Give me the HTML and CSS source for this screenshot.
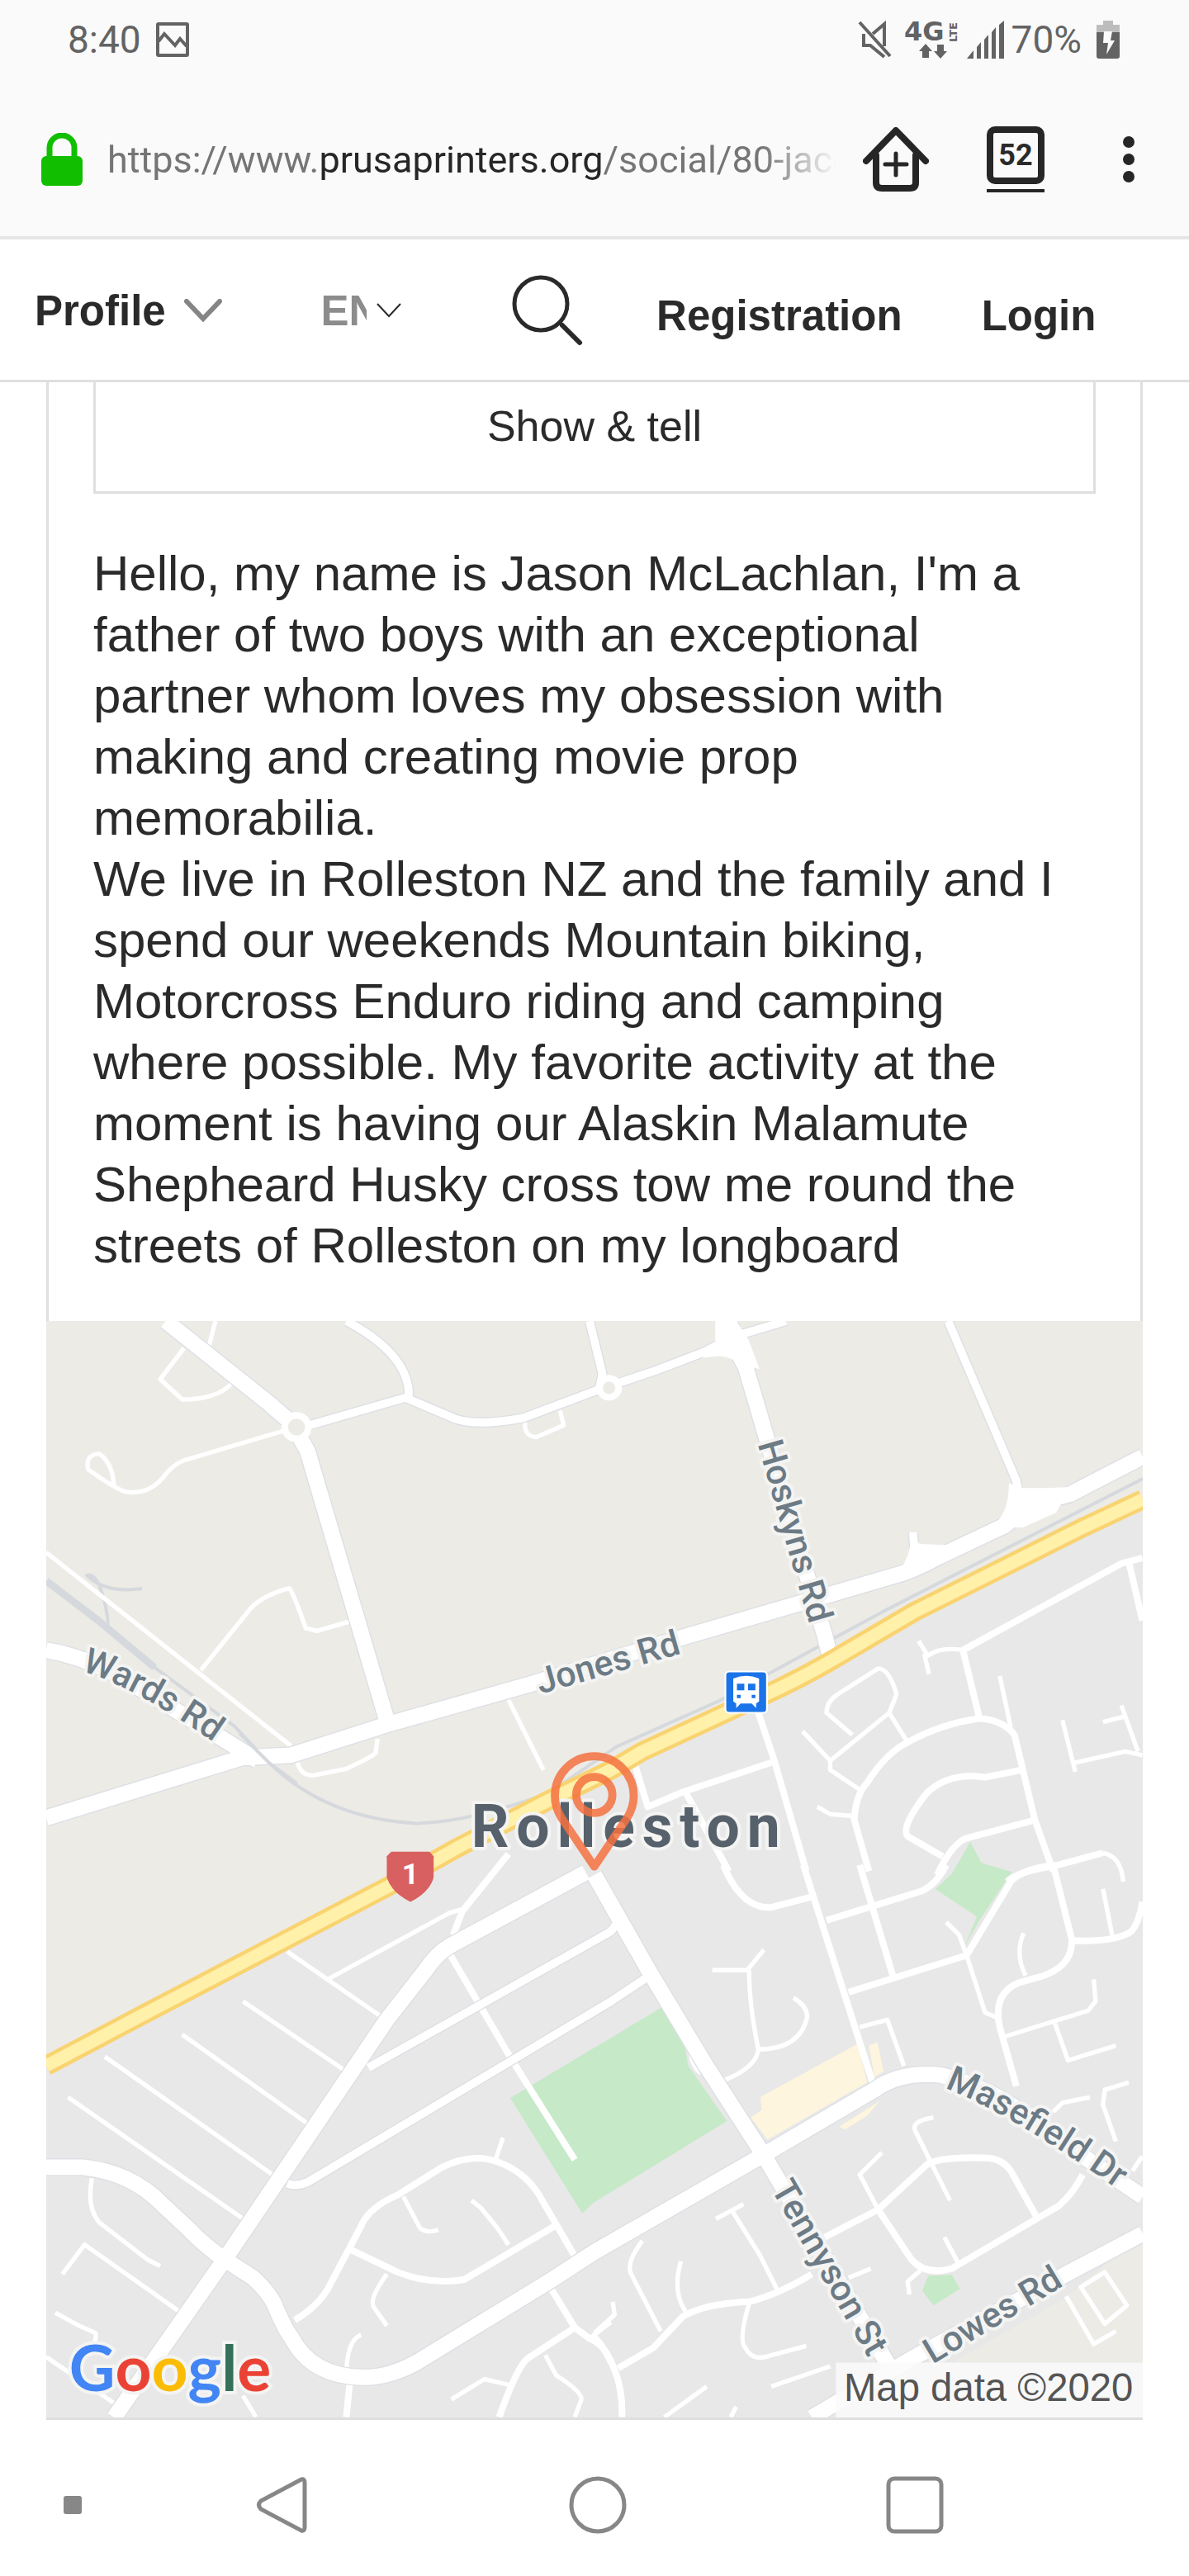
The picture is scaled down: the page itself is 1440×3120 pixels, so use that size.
FILE: index.html
```html
<!DOCTYPE html>
<html lang="en">
<head>
    <meta charset="UTF-8">
    <meta name="viewport" content="width=device-width, initial-scale=1.0">
    <title>Profile - PrusaPrinters</title>
    <link rel="stylesheet" href="styles.css">
</head>
<body>
    <div class="status-bar">
        <div class="status-group">
            <span>8:40</span>
            <svg width="40" height="42" viewBox="0 0 40 42">
                <rect x="2" y="2" width="36" height="38" rx="1" fill="none" stroke="#636363" stroke-width="4"/>
                <path d="M3 23l7-9 13 14 6-8 8 9" fill="none" stroke="#636363" stroke-width="4"/>
            </svg>
        </div>
        <div class="status-group status-right">
            <svg class="network" width="124" height="46" viewBox="0 0 124 46">
                <g fill="none" stroke="#636363" stroke-width="4">
                    <path d="M2 2l37 41"/>
                    <path d="M18 16L32 4v27M7 16v14h8l17 14"/>
                </g>
                <text class="net-type" x="56" y="24">4G</text>
                <text class="net-lte" transform="translate(120 26) rotate(-90)">LTE</text>
                <path fill="#636363" d="M82 28l8 9h-4v8h-8v-8h-4zM100 46l-8-9h4v-8h8v8h4z"/>
            </svg>
            <svg width="46" height="46" viewBox="0 0 46 46">
                <path fill="#636363" d="M0 46l8-10v10zM12 46V32l5-6v20zM21 46V23l5-6v29zM30 46V14l5-6v38zM39 46V5l6-5v46z"/>
            </svg>
            <span>70%</span>
            <svg class="battery" width="28" height="46" viewBox="0 0 28 46">
                <path fill="#bdbdbd" d="M8 0h12v5h8v9H0V5h8z"/>
                <path fill="#636363" d="M0 14h28v29q0 3-3 3H3q-3 0-3-3z"/>
                <path fill="#fafafa" d="M9 13h10l-2 11h5L12 41l2-14H8z"/>
            </svg>
        </div>
    </div>

    <div class="toolbar">
        <svg width="50" height="64" viewBox="0 0 50 64">
            <path d="M10 32V18a15 15 0 0 1 30 0v14" fill="none" stroke="#12be00" stroke-width="7"/>
            <rect y="28" width="50" height="36" rx="6" fill="#12be00"/>
        </svg>
        <div class="url">https://www.<b>prusaprinters.org</b>/social/80-jace</div>
        <button class="tool" type="button" aria-label="Home">
            <svg width="80" height="78" viewBox="0 0 80 78" fill="none" stroke="#262626" stroke-linecap="round" stroke-linejoin="round">
                <path d="M4 41L40 4l36 37M16 34v33q0 7 7 7h34q7 0 7-7V34" stroke-width="8"/>
                <path d="M40 32v26M27 45h26" stroke-width="5"/>
            </svg>
        </button>
        <button class="tool tabs" type="button" aria-label="Tabs"><span>52</span></button>
        <button class="tool" type="button" aria-label="Menu">
            <svg width="14" height="58" viewBox="0 0 14 58" fill="#262626">
                <circle cx="7" cy="8" r="7"/><circle cx="7" cy="29" r="7"/><circle cx="7" cy="50" r="7"/>
            </svg>
        </button>
    </div>

    <header class="site-header">
        <a class="profile" href="#">Profile
            <svg width="46" height="28" viewBox="0 0 46 28"><path d="M3 3l20 21L43 3" fill="none" stroke="#858585" stroke-width="6" stroke-linecap="round"/></svg>
        </a>
        <div class="lang">
            <select aria-label="Language"><option>EN</option></select>
            <svg width="30" height="18" viewBox="0 0 30 18"><path d="M1 1l14 15L29 1" fill="none" stroke="#2a2a2a" stroke-width="2"/></svg>
        </div>
        <button class="search" type="button" aria-label="Search">
            <svg width="88" height="88" viewBox="0 0 88 88" fill="none" stroke="#2a2a2a" stroke-linecap="round">
                <circle cx="36" cy="36" r="32" stroke-width="5"/>
                <path d="M62 62l21 21" stroke-width="6"/>
            </svg>
        </button>
        <a class="account" href="#">Registration</a>
        <a class="account" href="#">Login</a>
    </header>

    <main class="card">
        <div class="card-body">
            <a class="tab" href="#">Show &amp; tell</a>
            <p class="bio">Hello, my name is Jason McLachlan, I'm a father of two boys with an exceptional partner whom loves my obsession with making and creating movie prop memorabilia.<br>
            We live in Rolleston NZ and the family and I spend our weekends Mountain biking, Motorcross Enduro riding and camping where possible. My favorite activity at the moment is having our Alaskin Malamute Shepheard Husky cross tow me round the streets of Rolleston on my longboard</p>
        </div>
        <svg class="map" viewBox="0 0 2975 2975" role="img" aria-label="Map of Rolleston">
            <defs>
                <path id="main-roads" d="M0 1348L530 1185 664 1178 924 1095 1314 985 1727 858 2037 768 2287 695Q2350 680 2420 640L2600 555 2667 500Q2720 485 2777 470L2975 368M0 893Q104 910 214 973L494 1143 574 1193M1464 1496L1094 1696Q1060 1716 1030 1760L924 1896 484 2546 184 2975M1487 1503L1637 1766 1787 2016 1942 2256 2287 2836M0 2296H100Q230 2310 314 2396L384 2461Q430 2510 484 2546L560 2595Q610 2640 624 2680 650 2740 664 2756 720 2866 864 2866 930 2866 1004 2826L1364 2606 1487 2526 1957 2256 2247 2086Q2317 2035 2427 2046 2560 2080 2650 2150L2827 2276 2975 2376M2975 2476L2767 2586 2347 2816 2077 2975M2127 913L2112 853 1897 123 1862 60 1855 0M924 1083L709 353 679 300M679 288L604 223 324 0"/>
                <path id="side-roads" d="M654 2340Q680 2350 710 2336L1532 1846 1637 1776M874 2026L1532 1656 1547 1636M714 283L974 208 1090 257Q1150 290 1294 263L1494 188 1657 133 1787 83 1862 43 2007 0M814 0Q984 90 984 203M1474 0L1509 143 1500 188M2447 0L2632 433 2647 510M2352 573L2357 650"/>
                <path id="highway" d="M0 2021L274 1876 934 1531 1114 1430 1364 1300 1532 1218 1617 1168 1897 1038Q2020 985 2127 923L2357 788 2587 673 2817 558 2975 484"/>
                <path id="wards-label" d="M94 950Q230 985 480 1160"/>
                <path id="masefield-label" d="M2437 2081Q2620 2150 2950 2386"/>
            </defs>
            <rect class="rural" width="2975" height="2975"/>
            <path class="urban" d="M0 2021L934 1531 1532 1218 2127 923 2975 484V2975H0z"/>
            <path class="rural" d="M2757 2656L2917 2526 2975 2490V2826H2457z"/>

            <!-- parks and shops -->
            <path class="park" d="M1259 2108L1672 1861 1732 1966 1742 2021 1847 2171 1487 2391 1454 2421zM2457 1500L2507 1413 2537 1470 2620 1495 2532 1626 2492 1696 2525 1616 2412 1541zM2392 2591L2457 2588 2479 2626 2407 2671 2377 2631z"/>
            <path class="shops" d="M1937 2106L2202 1961 2227 2066 1957 2221 1912 2161 1942 2140zM2232 1966L2255 1956 2272 2036 2247 2051zM2152 2186L2262 2116 2227 2156 2167 2194z"/>

            <!-- railway -->
            <path class="rail" d="M144 815L294 940 509 1098 604 1198Q760 1350 1004 1363 1150 1360 1364 1280L1547 1155 1827 1030 1967 953 2267 790 2975 428M144 815Q180 860 160 770T110 690Q160 740 260 726"/>
            <path class="rail rail-wide" d="M0 705L144 815 294 940"/>

            <!-- lanes, by quarter -->
            <g class="lane">
                <path transform="translate(-36 -47)" d="M410 120L345 205 405 260Q500 260 540 215M495 47L475 125M680 345L410 425Q380 435 350 475 310 520 250 510 220 500 150 450 140 410 180 407 215 430 220 495M36 675L700 1200M455 995L580 840Q610 795 695 772 705 780 740 880L770 888 860 862M715 1230Q720 1280 760 1280L850 1262Q940 1220 930 1215L935 1180M1290 1075L1385 1265M1335 315Q1330 360 1365 362L1440 330 1430 290"/>
                <path transform="translate(1487 -47)" d="M850 1190L800 1110 640 1240 565 1160M640 1240V1265L730 1325M700 1170L630 1110Q630 1080 660 1060L770 990Q800 990 820 1060L800 1110M605 1365L640 1385 700 1390M1000 940Q940 930 905 955L880 915M895 950L908 1005M1100 1010L1130 1150M1270 1130L1305 1270M1305 1245L1440 1215 1487 1225M1430 1090L1475 1215M1380 1135L1440 1120M1380 1490Q1430 1500 1435 1568"/>
                <path transform="translate(-36 1476)" d="M690 235L950 415M800 310L1130 130 1165 120M570 370L850 560M405 460L750 705M195 520L650 840M95 630L570 960M160 850Q145 930 180 970L310 1070 345 1088M80 1110L140 1030 395 1210M60 1215L125 1250 170 1270Q175 1290 150 1320M36 1335L220 1460M1005 900L1050 985Q1070 1000 1100 990M1190 910L1215 930 1260 985 1290 1030M960 1110Q910 1180 925 1200L960 1250M850 1390Q850 1290 890 1275M1275 740L1255 800M1390 1330L1420 1385Q1490 1430 1488 1450L1470 1498M1135 1450L1225 1395 1290 1410M570 1440L605 1498M1510 1285L1568 1240"/>
                <path transform="translate(1487 1476)" d="M320 285H415L460 230M420 285Q420 380 445 500 440 550 350 585M445 500Q560 500 578 410 575 380 540 360M955 155L990 190 1010 245 1060 400 1095 415M1165 185Q1140 240 1170 300M1380 65L1405 190M1115 465L1340 395 1360 370 1355 310M1250 430L1285 530 1415 490M720 440L795 420 840 545M920 685Q860 695 870 720L965 910M780 780L720 840 770 935M950 1010L990 1085M885 1100L850 1130 855 1165M330 960L405 920M375 940L450 1060 495 1150M130 1020Q85 1080 100 1110L180 1265M235 1075Q210 1160 250 1215M420 1190Q390 1290 410 1310 430 1350 480 1330L575 1305M50 1185L55 1220 0 1270M690 1120L750 1095M480 1415L640 1360M190 1498L305 1415M370 1498L385 1470M1450 590L1385 610 1380 650 1415 750M1245 670L1270 645 1345 630M1280 1170L1355 1300 1415 1265M1320 1145L1385 1105 1445 1195 1385 1245zM1460 830L1487 790M260 500Q265 550 290 565"/>
            </g>

            <!-- streets, by quarter -->
            <g class="street">
                <path transform="translate(1487 -47)" d="M110 1250L145 1365 240 1325 480 1245M250 1330L365 1540M445 1110L490 1245 575 1540M745 1540L705 1400Q710 1330 740 1300 790 1220 850 1190 940 1140 1045 1125 1110 1130 1140 1170L1195 1400 1245 1540M1045 1125L1000 940 1430 705 1487 690M1450 700L1487 860M1160 1265L1060 1285Q960 1270 900 1330 830 1420 850 1445L945 1500M1200 1400L1010 1450Q970 1465 930 1550M1120 1568Q1150 1540 1250 1525L1380 1490"/>
                <path transform="translate(-36 1476)" d="M1140 190L1165 125 1290-30M1130 240L1300 530 1470 800M710 1235Q770 1200 800 1150L890 980Q910 930 990 895L1110 820Q1190 780 1260 805 1330 830 1370 890L1475 1070M865 1045L990 1105Q1080 1140 1170 1125L1415 980M850 1498L860 1400M1400 1140L1470 1255 1340 1340Q1310 1370 1265 1498M1470 1255L1510 1285Q1550 1300 1568 1350"/>
                <path transform="translate(1487 1476)" d="M350 0Q400 120 480 115L595 85M567 0L755 590M720 0L810 300M630 150L890 70Q930 50 955 0M690 345L1010 245 1130 45Q1160 10 1250 0M1245 0L1295 200Q1300 270 1220 300L1150 320Q1080 350 1100 440L1145 600M1300 205Q1400 210 1450 185 1475 170 1487 100M625 1010L770 935 900 815Q930 790 1070 795 1110 800 1130 830L1200 955M770 935L860 1070Q900 1115 970 1095L1200 960 1260 925Q1300 890 1325 840M65 1365L160 1310 240 1225Q300 1190 420 1185 500 1165 590 1110M0 1280Q80 1370 75 1498"/>
            </g>

            <use class="side casing" href="#side-roads"/>
            <use class="main casing" href="#main-roads"/>
            <use class="side" href="#side-roads"/>
            <use class="main" href="#main-roads"/>
            <!-- widened junctions -->
            <path fill="#fff" d="M2612 440L2650 453H2720L2780 450 2740 520 2650 560 2560 560Q2612 530 2612 440zM2346 580L2370 605 2450 608 2400 670 2300 690Q2346 650 2346 580zM1815 0H1872L1905 50 1935 130 1885 120Q1860 95 1820 95L1780 100 1815 60z"/>
            <circle class="roundabout" cx="679" cy="288" r="32"/>
            <circle class="roundabout" cx="1527" cy="181" r="26"/>
            <use class="highway-edge" href="#highway"/>
            <use class="highway" href="#highway"/>
            <path class="rail" d="M524 1118L604 1198 680 1255"/>

            <g class="road-label">
                <text><textPath href="#wards-label">Wards Rd</textPath></text>
                <text transform="translate(1340 1012) rotate(-16)">Jones Rd</text>
                <text transform="translate(1930 333) rotate(74)">Hoskyns Rd</text>
                <text><textPath href="#masefield-label">Masefield Dr</textPath></text>
                <text transform="translate(1965 2354) rotate(60)">Tennyson St</text>
                <text transform="translate(2405 2831) rotate(-31)">Lowes Rd</text>
            </g>
            <text class="town" x="1153" y="1426">Rolleston</text>

            <!-- highway shield -->
            <path fill="#d96060" d="M924 1452L936 1440H1040L1051 1452V1510Q1040 1550 988 1576 936 1550 924 1510z"/>
            <text class="shield" x="988" y="1528">1</text>

            <!-- railway station -->
            <rect x="1840" y="949" width="118" height="116" rx="12" fill="#fff"/>
            <rect x="1845" y="953" width="108" height="108" rx="8" fill="#1a73e8"/>
            <path fill="#fff" d="M1864 970Q1899 956 1934 970V1032L1926 1038V1050L1914 1038H1884L1872 1050V1038L1864 1032z"/>
            <path fill="#1a73e8" d="M1874 984h20v18h-20zM1904 984h20v18h-20zM1874 1014h10v9h-10zM1914 1014h10v9h-10z"/>

            <!-- location pin -->
            <g fill="none" stroke="#f4713f" stroke-opacity=".85" stroke-width="22" stroke-linejoin="round">
                <path d="M1487 1480L1399 1350Q1380 1320 1380 1288A107 107 0 0 1 1594 1288Q1594 1320 1575 1350z"/>
                <circle cx="1487" cy="1286" r="49"/>
            </g>

            <text class="google" x="62" y="2904"><tspan fill="#4285f4">G</tspan><tspan fill="#ea4335">o</tspan><tspan fill="#fbbc05">o</tspan><tspan fill="#4285f4">g</tspan><tspan fill="#34705a">l</tspan><tspan fill="#ea4335">e</tspan></text>
            <rect x="2142" y="2826" width="833" height="149" fill="#fafafa" fill-opacity=".85"/>
            <text class="copyright" x="2164" y="2931">Map data ©2020</text>
        </svg>
    </main>

    <nav class="system-nav">
        <span class="nav-dot"></span>
        <button type="button" aria-label="Back">
            <svg width="62" height="70" viewBox="0 0 62 70"><path d="M55 4L6 30Q1 35 6 40L55 66Q59 67 59 62V8Q59 3 55 4z" fill="none" stroke="#878787" stroke-width="5"/></svg>
        </button>
        <button type="button" aria-label="Home screen">
            <svg width="70" height="70" viewBox="0 0 70 70"><circle cx="35" cy="35" r="32" fill="none" stroke="#878787" stroke-width="5"/></svg>
        </button>
        <button type="button" aria-label="Recent apps">
            <svg width="70" height="70" viewBox="0 0 70 70"><rect x="3" y="3" width="64" height="64" rx="7" fill="none" stroke="#878787" stroke-width="5"/></svg>
        </button>
    </nav>
</body>
</html>
```
FILE: styles.css
```css
* {
    box-sizing: border-box;
}

body {
    margin: 0;
    background-color: #fff;
    color: #2a2a2a;
    font-family: "Liberation Sans", Arial, sans-serif;
}

svg {
    display: block;
    flex-shrink: 0;
}

a {
    color: inherit;
    text-decoration: none;
}

button {
    padding: 0;
    border: none;
    background: none;
    color: inherit;
    cursor: pointer;
}

/* phone status bar */
.status-bar {
    display: flex;
    justify-content: space-between;
    align-items: center;
    height: 96px;
    padding: 0 84px 0 82px;
    background-color: #fafafa;
    color: #636363;
    font-family: Roboto, sans-serif;
    font-size: 46px;
}

.status-group {
    display: flex;
    align-items: center;
    gap: 18px;
}

.status-right {
    gap: 8px;
}

.network {
    overflow: visible;
}

.battery {
    margin-left: 10px;
}

.net-type {
    fill: #636363;
    font: bold 32px "DejaVu Sans", sans-serif;
}

.net-lte {
    fill: #636363;
    font: bold 13px "DejaVu Sans", sans-serif;
}

/* browser toolbar */
.toolbar {
    display: flex;
    align-items: center;
    height: 194px;
    padding: 4px 66px 0 50px;
    border-bottom: 4px solid #e6e6e6;
    background-color: #fafafa;
}

.url {
    flex: 1;
    min-width: 0;
    margin: 0 32px 0 30px;
    overflow: hidden;
    white-space: nowrap;
    color: #757575;
    font-family: Roboto, sans-serif;
    font-size: 45px;
    -webkit-mask-image: linear-gradient(to left, transparent, #000 90px);
    mask-image: linear-gradient(to left, transparent, #000 90px);
}

.url b {
    color: #262626;
    font-weight: normal;
}

.tool + .tool {
    margin-left: 70px;
}

.tabs {
    padding-bottom: 6px;
    border-bottom: 4px solid #262626;
}

.tabs span {
    display: block;
    width: 70px;
    border: 8px solid #262626;
    border-radius: 10px;
    font: bold 36px/54px Roboto, sans-serif;
}

.tabs + .tool {
    margin-left: 95px;
}

/* site header */
.site-header {
    display: grid;
    grid-template-columns: 346fr 230fr 176fr 393fr 251fr;
    align-items: center;
    height: 173px;
    padding: 2px 0 0 42px;
    border-bottom: 3px solid #dfdfdf;
    font-size: 51px;
    font-weight: bold;
}

.profile {
    display: flex;
    align-items: center;
    gap: 22px;
}

.lang {
    display: flex;
    align-items: center;
    gap: 12px;
}

.lang select {
    width: 56px;
    padding: 0;
    border: none;
    background: none;
    color: #8c8c8c;
    font: inherit;
    appearance: none;
}

.search {
    justify-self: start;
}

.account {
    padding-top: 12px;
}

/* profile card */
.card {
    margin: 0 56px;
    border-bottom: 3px solid #dfdfdf;
}

.card-body {
    padding: 0 54px 54px;
    border: solid #dfdfdf;
    border-width: 0 3px;
}

.tab {
    display: block;
    padding: 20px 0 46px;
    border: 3px solid #dfdfdf;
    border-top: none;
    font-size: 52px;
    line-height: 66px;
    text-align: center;
}

.bio {
    margin: 0;
    padding: 60px 40px 0 0;
    font-size: 60px;
    line-height: 74px;
}

/* map */
.map {
    width: 100%;
    height: auto;
}

.rural {
    fill: #ecebe6;
}

.urban {
    fill: #e8e8e8;
}

.park {
    fill: #c6e9c8;
}

.shops {
    fill: #fdf5de;
}

.rail,
.lane,
.street,
.side,
.main,
.highway,
.highway-edge {
    fill: none;
    stroke: #fff;
    stroke-linejoin: round;
}

.rail {
    stroke: #d5d9dd;
    stroke-width: 9;
}

.rail-wide {
    stroke-width: 20;
}

.lane {
    stroke-width: 12;
}

.street {
    stroke-width: 18;
}

.side {
    stroke-width: 22;
}

.main {
    stroke-width: 42;
}

.side.casing,
.main.casing {
    stroke: #dcdfe4;
}

.side.casing {
    stroke-width: 28;
}

.main.casing {
    stroke-width: 48;
}

.roundabout {
    fill: #ecebe6;
    stroke: #fff;
    stroke-width: 18;
}

.highway-edge {
    stroke: #f9d370;
    stroke-width: 54;
}

.highway {
    stroke: #fff0aa;
    stroke-width: 34;
}

.road-label,
.town {
    fill: #6c7b85;
    stroke: #f4f4f3;
    stroke-width: 18;
    stroke-linejoin: round;
    paint-order: stroke;
    font: 500 96px Roboto, sans-serif;
}

.town {
    fill: #56616c;
    font-size: 160px;
    font-weight: bold;
    letter-spacing: 20px;
}

.shield {
    fill: #fff;
    font: bold 80px Roboto, sans-serif;
    text-anchor: middle;
}

.google {
    stroke: #f4f4f3;
    stroke-width: 18;
    paint-order: stroke;
    font: bold 172px Lato, sans-serif;
}

.copyright {
    fill: #555;
    font: 106px "Liberation Sans", Arial, sans-serif;
}

/* system navigation */
.system-nav {
    display: grid;
    grid-template-columns: 176fr 330fr 436fr 332fr 166fr;
    place-items: center;
    padding: 68px 0 50px;
}

.nav-dot {
    width: 22px;
    height: 22px;
    border-radius: 3px;
    background-color: #878787;
}
```
